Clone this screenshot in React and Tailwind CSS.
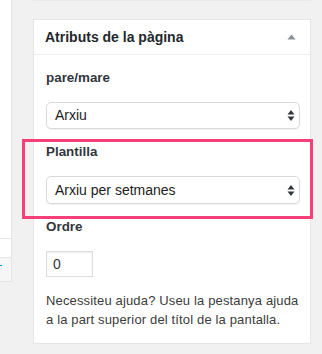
import { useState } from "react";

function UpDown() {
  return (
    <svg width="8" height="13" viewBox="0 0 8 13" className="shrink-0">
      <path d="M4 1 L7.5 5.5 L0.5 5.5 Z" fill="#32373c" />
      <path d="M4 12 L7.5 7.5 L0.5 7.5 Z" fill="#32373c" />
    </svg>
  );
}

function Select({ value, height }) {
  return (
    <div
      className={`flex items-center justify-between ${height} w-[254px] rounded-[5px] border border-[#d9d9d9] bg-white pl-[8px] pr-[4px] text-[14px] text-[#1d1d1d] shadow-[0_1px_1px_rgba(0,0,0,0.06)]`}
    >
      <span>{value}</span>
      <UpDown />
    </div>
  );
}

export default function App() {
  const [order] = useState("0");

  return (
    <div
      className="relative flex h-[354px] w-[322px] items-start overflow-hidden bg-[#f1f1f1]"
      style={{ fontFamily: '"Liberation Sans", Arial, sans-serif' }}
    >
      {/* neighbour column on the left, mostly cut off */}
      <div className="flex w-[12px] shrink-0 flex-col border-r border-[#e5e5e5]">
        <div className="h-[239px] border-b border-[#e5e5e5] bg-white" />
        <div className="h-[19px] border-b border-[#e5e5e5] bg-white" />
        <div className="relative h-[24px] border-b border-[#e5e5e5] bg-[#f6f6f6]">
          <div className="absolute left-0 top-[7px] h-[1px] w-[2px] bg-[#00a0d2]" />
        </div>
      </div>

      <div className="ml-[21px] flex w-[278px] shrink-0 flex-col">
        <div className="h-[1px] bg-[#e9e9e9]" />

        <div className="mt-[18px] border border-[#e5e5e5] bg-white">
          <div className="flex h-[35px] items-center justify-between border-b border-[#eeeeee] pl-[11px] pr-[14px]">
            <h2 className="text-[14px] font-bold text-[#23282d]">Atributs de la pàgina</h2>
            <svg width="9" height="6" viewBox="0 0 9 6">
              <path d="M4.5 0.5 L8.5 5.5 L0.5 5.5 Z" fill="#8c8f94" />
            </svg>
          </div>

          <div className="flex flex-col pl-[12px] pr-[8px] pb-[14px] pt-[14px] text-[13px] text-[#444]">
            <p className="h-[18px] text-[13.4px] font-bold leading-[18px] text-[#32373c]">pare/mare</p>
            <div className="mt-[15px]">
              <Select value="Arxiu" height="h-[27px]" />
            </div>

            <p className="mt-[14px] h-[18px] text-[13.4px] font-bold leading-[18px] text-[#32373c]">Plantilla</p>
            <div className="mt-[15px]">
              <Select value="Arxiu per setmanes" height="h-[28px]" />
            </div>

            <p className="mt-[14px] h-[18px] text-[13.4px] font-bold leading-[18px] text-[#32373c]">Ordre</p>
            <div className="mt-[15px] flex h-[26px] w-[47px] items-center border border-[#dddddd] bg-white pl-[6px] text-[14px] text-[#32373c] shadow-[inset_0_1px_2px_rgba(0,0,0,0.07)]">
              {order}
            </div>

            <p className="mt-[14px] text-[13px] leading-[19px] tracking-[0.15px] text-[#3c3c3c]">
              Necessiteu ajuda? Useu la pestanya ajuda a la part superior del títol de la pantalla.
            </p>
          </div>
        </div>
      </div>

      {/* annotation highlight */}
      <div className="pointer-events-none absolute left-[22px] top-[139px] h-[80px] w-[291px] border-[3px] border-[#f7407a]" />
    </div>
  );
}
